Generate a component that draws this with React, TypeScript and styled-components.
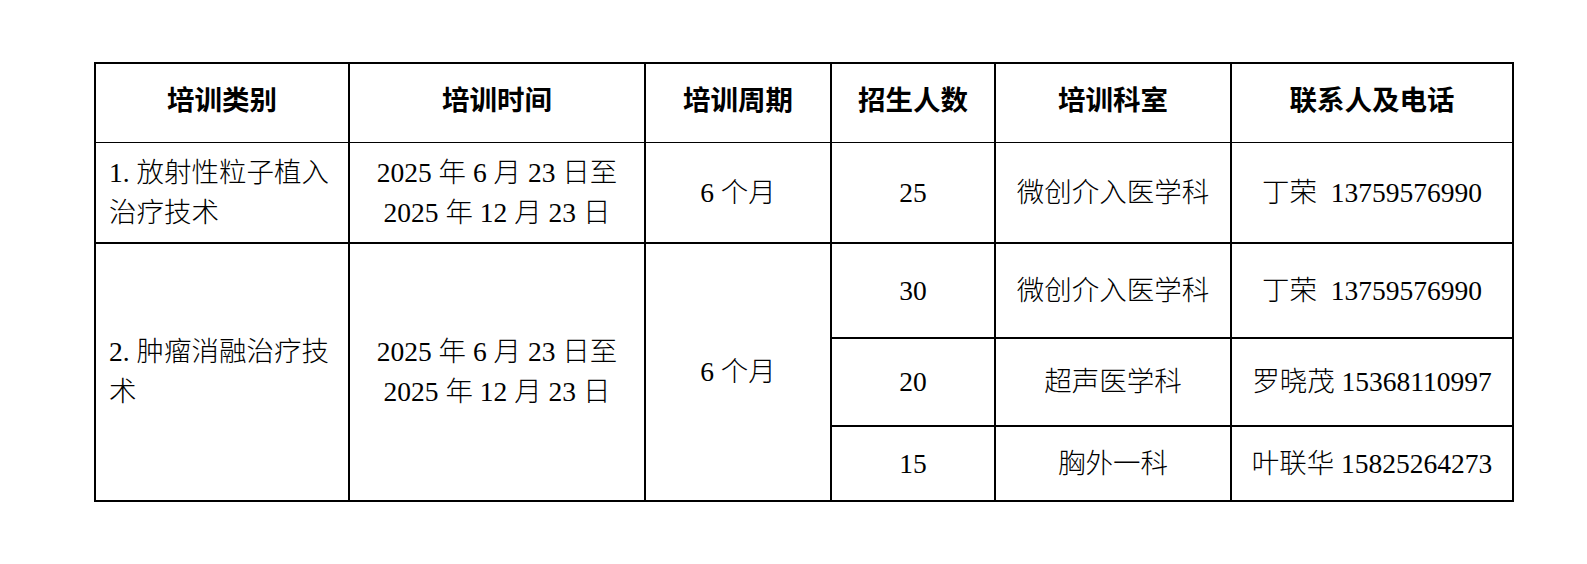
import styled, { createGlobalStyle } from 'styled-components'

const GlobalStyle = createGlobalStyle`
  *, *::before, *::after { box-sizing: border-box; }
  html, body { margin: 0; padding: 0; background: #fff; }
  body {
    font-family: "Liberation Serif", "Noto Sans CJK SC", serif;
    color: #000;
  }
`

const Page = styled.div`
  padding: 62px 0 0 94px;
`

const Table = styled.table`
  border-collapse: separate;
  border-spacing: 0;
  table-layout: fixed;
  width: 1420px;
  border-top: 2px solid #000;
  border-left: 2px solid #000;
  font-size: 27.5px;
  line-height: 40px;
`

const Row = styled.tr<{ $h: number }>`
  height: ${(p) => p.$h}px;
`

const Head = styled.th<{ $w: number }>`
  width: ${(p) => p.$w}px;
  padding: 0 10px 4px;
  border-right: 2px solid #000;
  border-bottom: 1px solid #000;
  font-weight: 700;
  text-align: center;
  vertical-align: middle;
`

const Cell = styled.td<{ $left?: boolean }>`
  padding: 0 ${(p) => (p.$left ? '12px 0 13px' : '8px')};
  border-right: 2px solid #000;
  border-bottom: 2px solid #000;
  font-weight: 300;
  white-space: pre-line;
  text-align: ${(p) => (p.$left ? 'left' : 'center')};
  vertical-align: middle;
`

const columns = [
  { title: '培训类别', w: 254 },
  { title: '培训时间', w: 296 },
  { title: '培训周期', w: 186 },
  { title: '招生人数', w: 164 },
  { title: '培训科室', w: 236 },
  { title: '联系人及电话', w: 282 },
]

const dates = '2025 年 6 月 23 日至\n2025 年 12 月 23 日'
const ding = '丁荣\u00a0\u00a013759576990'

export default function App() {
  return (
    <>
      <GlobalStyle />
      <Page>
        <Table>
          <thead>
            <Row $h={79}>
              {columns.map((c) => (
                <Head key={c.title} $w={c.w}>
                  {c.title}
                </Head>
              ))}
            </Row>
          </thead>
          <tbody>
            <Row $h={101}>
              <Cell $left>1. 放射性粒子植入治疗技术</Cell>
              <Cell>{dates}</Cell>
              <Cell>6 个月</Cell>
              <Cell>25</Cell>
              <Cell>微创介入医学科</Cell>
              <Cell>{ding}</Cell>
            </Row>
            <Row $h={95}>
              <Cell $left rowSpan={3}>
                2. 肿瘤消融治疗技术
              </Cell>
              <Cell rowSpan={3}>{dates}</Cell>
              <Cell rowSpan={3}>6 个月</Cell>
              <Cell>30</Cell>
              <Cell>微创介入医学科</Cell>
              <Cell>{ding}</Cell>
            </Row>
            <Row $h={88}>
              <Cell>20</Cell>
              <Cell>超声医学科</Cell>
              <Cell>罗晓茂 15368110997</Cell>
            </Row>
            <Row $h={75}>
              <Cell>15</Cell>
              <Cell>胸外一科</Cell>
              <Cell>叶联华 15825264273</Cell>
            </Row>
          </tbody>
        </Table>
      </Page>
    </>
  )
}
